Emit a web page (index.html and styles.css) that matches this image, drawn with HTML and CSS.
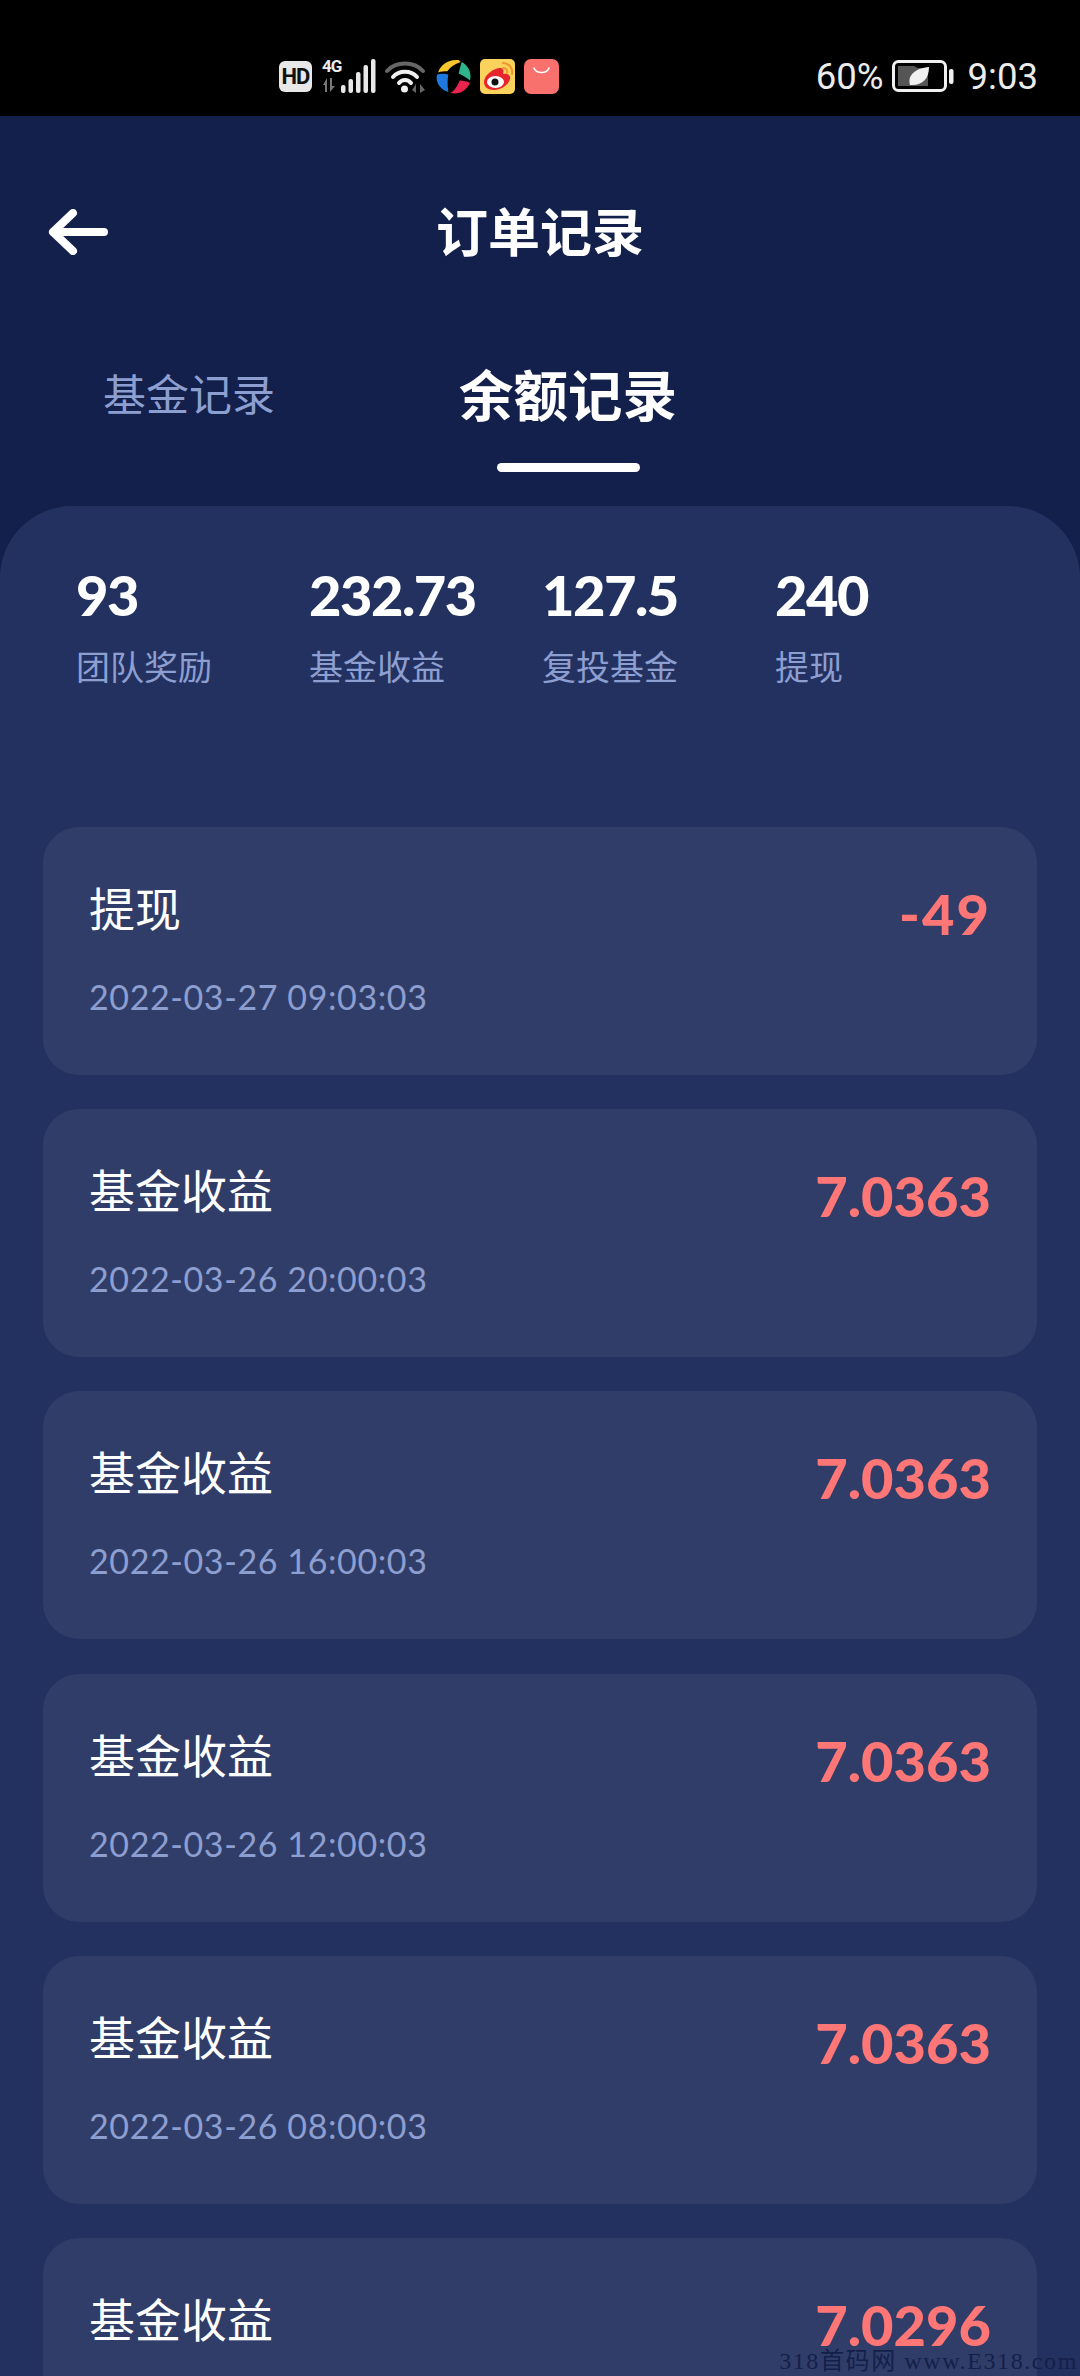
FILE: index.html
```html
<!DOCTYPE html>
<html>
<head>
    <title>订单记录</title>
    <meta name="viewport" content="width=device-width, initial-scale=1.0">
    <link rel="stylesheet" href="styles.css">
</head>
<body>
    <div class="statusbar">
        <div class="status-left">
            <span class="hd">HD</span>
            <div class="signal">
                <span class="net">4G</span>
                <svg class="signal-icon" viewBox="0 0 54 34">
                    <path d="M5 33V19L1 26H3V33zM8 19V33L13 27H10V19z" fill="#777"/>
                    <rect x="19" y="26" width="4.5" height="8" rx="2" fill="#e8e8e8"/>
                    <rect x="26.500" y="20" width="4.500" height="14" rx="2" fill="#e8e8e8"/>
                    <rect x="34" y="13" width="4.500" height="21" rx="2" fill="#e8e8e8"/>
                    <rect x="41.500" y="6" width="4.500" height="28" rx="2" fill="#e8e8e8"/>
                    <rect x="49" y="0" width="4.500" height="34" rx="2" fill="#e8e8e8"/>
                </svg>
            </div>
            <svg class="wifi" viewBox="0 0 42 34">
                <path d="M2 12C11 2 29 2 38 12" stroke="#666" stroke-width="4" fill="none" stroke-linecap="round"/>
                <path d="M8 18C14 11 26 11 32 18" stroke="#f0f0f0" stroke-width="4" fill="none" stroke-linecap="round"/>
                <path d="M14 24C17 20 23 20 26 24" stroke="#f0f0f0" stroke-width="4" fill="none" stroke-linecap="round"/>
                <circle cx="19.500" cy="30" r="3.500" fill="#f0f0f0"/>
                <path d="M31 34V25L27 31zM35 34V25L40 31z" fill="#666"/>
            </svg>
            <svg class="app" viewBox="0 0 34 34">
                <path d="M2 13C5 5 12 0 22 1L24 3C18 5 14 8 11 12C8 12 5 12 2 13Z" fill="#f7c52c"/>
                <path d="M25 3C31 6 35 13 33 21C30 18 26 16 22 14C23 10 24 6 25 3Z" fill="#2fb58c"/>
                <path d="M33 23C30 30 23 35 14 33C18 31 21 26 23 21C27 21 30 22 33 23Z" fill="#e8244f"/>
                <path d="M12 32C4 30 -1 22 1 15C5 14 8 14 12 15C11 20 11 26 12 32Z" fill="#1f78e0"/>
            </svg>
            <svg class="app" viewBox="0 0 35 35">
                <rect width="35" height="35" rx="5" fill="#fbd35c"/>
                <path d="M4 23C4 16 14 9 20 9C25 9 23 15 23 15C28 14 31 17 30 20C28 27 20 31 14 31C8 31 4 28 4 23Z" fill="#e6252c"/>
                <ellipse cx="15.500" cy="23" rx="8.500" ry="6" fill="#fff"/>
                <circle cx="15" cy="23" r="3.500" fill="#111"/>
                <path d="M23 4C29 4 33 9 32 15M23 9C26 9 28 11 27 14" stroke="#f0972b" stroke-width="2" fill="none" stroke-linecap="round"/>
            </svg>
            <svg class="app" viewBox="0 0 35 35">
                <rect width="35" height="35" rx="7" fill="#f9716c"/>
                <path d="M10 9C12 15 23 15 25 9" stroke="#fff" stroke-width="1.600" fill="none" stroke-linecap="round"/>
            </svg>
        </div>
        <div class="status-right">
            <span>60%</span>
            <svg class="battery" viewBox="0 0 62 32">
                <rect x="1.500" y="1.500" width="52" height="29" rx="5" stroke="#f0f0f0" stroke-width="3" fill="none"/>
                <path d="M6 6H22L26 8H36V26H6z" fill="#555"/>
                <path d="M18 25C15 15 24 8 37 7C37 19 30 26 18 25Z" fill="#f0f0f0"/>
                <rect x="57" y="9" width="4.500" height="15" rx="2" fill="#f0f0f0"/>
            </svg>
            <span>9:03</span>
        </div>
    </div>

    <div class="page">
        <div class="header">
            <svg class="back" viewBox="0 0 60 46">
                <path d="M25 4L5 23L25 42M5 23H56" stroke="#fff" stroke-width="8" fill="none" stroke-linecap="round" stroke-linejoin="round"/>
            </svg>
            <h2>订单记录</h2>
        </div>

        <div class="tabs">
            <div class="tab">基金记录</div>
            <div class="tab active">余额记录</div>
        </div>

        <div class="panel">
            <div class="stats">
                <div class="stat"><div class="stat-num">93</div><div class="stat-label">团队奖励</div></div>
                <div class="stat"><div class="stat-num">232.73</div><div class="stat-label">基金收益</div></div>
                <div class="stat"><div class="stat-num">127.5</div><div class="stat-label">复投基金</div></div>
                <div class="stat"><div class="stat-num">240</div><div class="stat-label">提现</div></div>
            </div>

            <div class="list">
                <div class="card">
                    <div><div class="card-title">提现</div><div class="card-date">2022-03-27 09:03:03</div></div>
                    <div class="amount neg">-49</div>
                </div>
                <div class="card">
                    <div><div class="card-title">基金收益</div><div class="card-date">2022-03-26 20:00:03</div></div>
                    <div class="amount">7.0363</div>
                </div>
                <div class="card">
                    <div><div class="card-title">基金收益</div><div class="card-date">2022-03-26 16:00:03</div></div>
                    <div class="amount">7.0363</div>
                </div>
                <div class="card">
                    <div><div class="card-title">基金收益</div><div class="card-date">2022-03-26 12:00:03</div></div>
                    <div class="amount">7.0363</div>
                </div>
                <div class="card">
                    <div><div class="card-title">基金收益</div><div class="card-date">2022-03-26 08:00:03</div></div>
                    <div class="amount">7.0363</div>
                </div>
                <div class="card">
                    <div><div class="card-title">基金收益</div></div>
                    <div class="amount">7.0296</div>
                </div>
            </div>
        </div>
    </div>

    <div class="watermark">318首码网 www.E318.com</div>
</body>
</html>
```

FILE: styles.css
```css
html, body {
    height: 2376px;
    overflow: hidden;
}

body {
    position: relative;
    margin: 0;
    background-color: #22315f;
    color: #fff;
    font-family: Lato, "Noto Sans CJK SC", sans-serif;
}

/* Status bar */
.statusbar {
    display: flex;
    justify-content: space-between;
    align-items: center;
    height: 116px;
    padding: 36px 42px 0 279px;
    box-sizing: border-box;
    background-color: #000;
    color: #ececec;
    font-family: Roboto, sans-serif;
}

.status-left {
    display: flex;
    align-items: center;
}

.hd {
    width: 33px;
    height: 31px;
    line-height: 31px;
    border-radius: 6px;
    background-color: #e8e8e8;
    color: #111;
    font-size: 22px;
    font-weight: 700;
    letter-spacing: -1px;
    text-align: center;
}

.signal {
    position: relative;
    width: 54px;
    height: 34px;
    margin-left: 10px;
}

.net {
    position: absolute;
    left: 0;
    top: -1px;
    font-size: 17px;
    font-weight: 700;
    letter-spacing: -1px;
    line-height: 16px;
}

.signal-icon {
    display: block;
    width: 54px;
    height: 34px;
}

.wifi {
    width: 42px;
    height: 34px;
    margin-left: 9px;
}

.app {
    width: 35px;
    height: 35px;
    margin-left: 9px;
}

.status-right {
    display: flex;
    align-items: center;
    font-size: 36.500px;
}

.battery {
    width: 62px;
    height: 32px;
    margin: 0 14px 0 8px;
}

/* Header and tabs */
.page {
    background: linear-gradient(#12204b, #111f4a);
}

.header {
    display: grid;
    grid-template-columns: 1fr auto 1fr;
    align-items: center;
    height: 232px;
    padding-left: 48px;
    padding-right: 48px;
    box-sizing: border-box;
}

.back {
    width: 60px;
    height: 46px;
}

h2 {
    margin: 0;
    font-size: 52px;
    font-weight: 700;
    line-height: 60px;
}

.tabs {
    display: flex;
    align-items: flex-start;
    gap: 184px;
    height: 158px;
    padding: 22px 0 0 103px;
    box-sizing: border-box;
}

.tab {
    font-size: 43px;
    line-height: 50px;
    color: #8d9ed0;
}

.tab.active {
    color: #fff;
    font-size: 54.500px;
    font-weight: 700;
}

.tab.active::after {
    content: "";
    display: block;
    width: 143px;
    height: 9px;
    margin: 43px auto 0;
    border-radius: 5px;
    background-color: #fff;
}

/* Panel */
.panel {
    height: 1870px;
    padding: 61px 43px 0;
    box-sizing: border-box;
    border-radius: 72px 72px 0 0;
    background-color: #22315f;
}

.stats {
    display: grid;
    grid-template-columns: repeat(4, 233px);
    padding-left: 33px;
    margin-bottom: 140px;
}

.stat-num {
    font-size: 56px;
    font-weight: 900;
    letter-spacing: -1.500px;
    line-height: 56px;
}

.stat-label {
    margin-top: 24px;
    font-size: 34px;
    line-height: 40px;
    color: #8d9ed0;
}

.list {
    display: flex;
    flex-direction: column;
    gap: 34.200px;
}

.card {
    display: flex;
    justify-content: space-between;
    align-items: flex-start;
    flex-shrink: 0;
    height: 248px;
    padding: 52px 46px 0;
    box-sizing: border-box;
    border-radius: 36px;
    background-color: #303d68;
}

.card-title {
    font-size: 46px;
    line-height: 60px;
}

.card-date {
    margin-top: 38px;
    font-size: 34px;
    letter-spacing: 0.600px;
    line-height: 40px;
    color: #8d9ed0;
}

.amount {
    margin-top: 5px;
    font-size: 56px;
    font-weight: 900;
    line-height: 60px;
    color: #ff7676;
}

.amount.neg {
    letter-spacing: 2px;
}

.watermark {
    position: absolute;
    right: 2px;
    bottom: 0;
    font-family: "Liberation Serif", "Noto Sans CJK SC", serif;
    font-size: 24px;
    letter-spacing: 1.600px;
    line-height: 30px;
    color: #14204a;
}
```
